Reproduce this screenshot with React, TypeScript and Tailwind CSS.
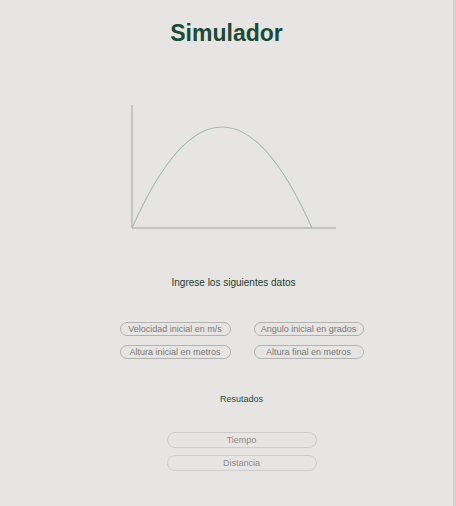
import React from 'react';

// Projectile simulator form
export default function App() {
  const font = { fontFamily: '"Liberation Sans", Arial, sans-serif' };
  return (
    <div
      className="min-h-[506px] w-full bg-[#e7e5e3] border-r-[3px] border-[#d4d2d0] flex flex-col items-center"
      style={font}
    >
      <h1 className="mt-[18px] text-[23px] leading-[30px] font-bold text-[#1d4a35]">Simulador</h1>

      <div className="w-full flex justify-center pl-[12px] mt-[52px]">
        <svg width="214" height="130" viewBox="0 0 214 130">
          <line x1="6" y1="5" x2="6" y2="128" stroke="#b9b8b6" strokeWidth="1.5" />
          <line x1="6" y1="128" x2="210" y2="128" stroke="#b9b8b6" strokeWidth="1.5" />
          <path d="M 6 128 Q 96 -74 186 128" fill="none" stroke="#a6bbb0" strokeWidth="1.2" />
        </svg>
      </div>

      <div className="w-full flex justify-center pl-[14px] mt-[46px]">
        <p className="text-[10px] leading-[14px] text-[#1a3a2c]">Ingrese los siguientes datos</p>
      </div>

      <div className="w-full flex justify-center pl-[30px] mt-[32px]">
        <div className="grid grid-cols-[111px_110px] gap-x-[23px] gap-y-[9px]">
          <Field placeholder="Velocidad inicial en m/s" />
          <Field placeholder="Angulo inicial en grados" />
          <Field placeholder="Altura inicial en metros" />
          <Field placeholder="Altura final en metros" />
        </div>
      </div>

      <div className="w-full flex justify-center pl-[30px] mt-[33px]">
        <p className="text-[9px] leading-[14px] text-[#2a4a3a]">Resutados</p>
      </div>

      <div className="w-full flex flex-col items-center gap-[7px] pl-[30px] mt-[26px]">
        <Result placeholder="Tiempo" />
        <Result placeholder="Distancia" />
      </div>
    </div>
  );
}

function Field({ placeholder }: { placeholder: string }) {
  return (
    <input
      placeholder={placeholder}
      className="h-[14px] w-full rounded-full border border-[#b3b2b0] bg-transparent px-1 text-center text-[9px] leading-[12px] text-[#666] placeholder:text-[#777] outline-none"
    />
  );
}

function Result({ placeholder }: { placeholder: string }) {
  return (
    <input
      readOnly
      placeholder={placeholder}
      className="h-[16px] w-[150px] rounded-full border border-[#cfcdcb] bg-transparent text-center text-[9px] leading-[14px] text-[#888] placeholder:text-[#8a8a8a] outline-none"
    />
  );
}
